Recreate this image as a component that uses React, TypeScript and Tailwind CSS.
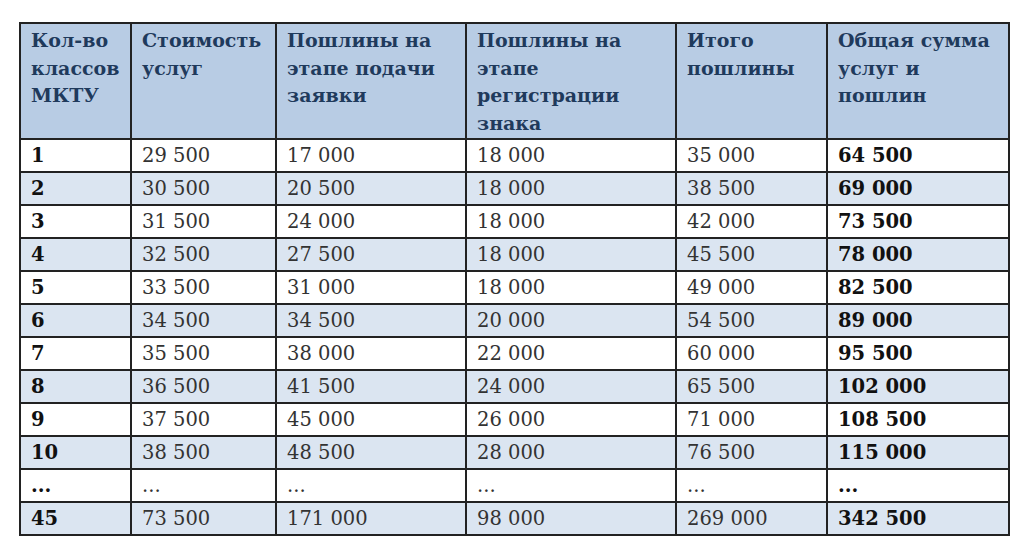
const headers = [
  ['Кол-во', 'классов', 'МКТУ'],
  ['Стоимость', 'услуг'],
  ['Пошлины на', 'этапе подачи', 'заявки'],
  ['Пошлины на', 'этапе', 'регистрации', 'знака'],
  ['Итого', 'пошлины'],
  ['Общая сумма', 'услуг и', 'пошлин'],
];

const widths = ['w-[111px]', 'w-[145px]', 'w-[190px]', 'w-[210px]', 'w-[151px]', 'w-[182px]'];

const rows = [
  ['1', '29 500', '17 000', '18 000', '35 000', '64 500'],
  ['2', '30 500', '20 500', '18 000', '38 500', '69 000'],
  ['3', '31 500', '24 000', '18 000', '42 000', '73 500'],
  ['4', '32 500', '27 500', '18 000', '45 500', '78 000'],
  ['5', '33 500', '31 000', '18 000', '49 000', '82 500'],
  ['6', '34 500', '34 500', '20 000', '54 500', '89 000'],
  ['7', '35 500', '38 000', '22 000', '60 000', '95 500'],
  ['8', '36 500', '41 500', '24 000', '65 500', '102 000'],
  ['9', '37 500', '45 000', '26 000', '71 000', '108 500'],
  ['10', '38 500', '48 500', '28 000', '76 500', '115 000'],
  ['...', '...', '...', '...', '...', '...'],
  ['45', '73 500', '171 000', '98 000', '269 000', '342 500'],
];

export default function App() {
  return (
    <div className="w-[1024px] h-[550px] bg-white pt-[22px] pl-[19px] font-['DejaVu_Serif',serif]">
      <table className="table-fixed border-collapse w-[989px]">
        <colgroup>
          {widths.map((w, i) => (
            <col key={i} className={w} />
          ))}
        </colgroup>
        <thead>
          <tr className="bg-[#b8cce4] h-[116px]">
            {headers.map((h, i) => (
              <th
                key={i}
                className="border-2 border-[#222] align-top text-left font-bold text-[#1f3a5c] text-[19px] leading-[27.5px] pl-[10px] pr-0 pt-[3px] whitespace-nowrap"
              >
                {h.map((line, li) => (
                  <div key={li}>{line}</div>
                ))}
              </th>
            ))}
          </tr>
        </thead>
        <tbody>
          {rows.map((r, ri) => (
            <tr key={ri} className={`h-[33px] ${ri % 2 === 1 ? 'bg-[#dbe5f1]' : 'bg-white'}`}>
              {r.map((c, ci) => (
                <td
                  key={ci}
                  className={`border-2 border-[#222] pl-[10px] text-[19.5px] leading-[29px] p-0 ${
                    ci === 0 || ci === 5 ? 'font-bold text-[#111]' : 'text-[#333]'
                  }`}
                >
                  {c}
                </td>
              ))}
            </tr>
          ))}
        </tbody>
      </table>
    </div>
  );
}
